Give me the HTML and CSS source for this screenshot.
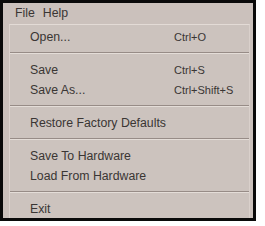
FILE: index.html
```html
<!DOCTYPE html>
<html>
<head>
<meta charset="utf-8">
<link rel="stylesheet" href="styles.css">
</head>
<body>
<div class="frame">
  <div class="menubar">
    <span class="top-item">File</span>
    <span class="top-item">Help</span>
  </div>
  <div class="dropdown">
    <div class="item"><span class="label">Open...</span><span class="key">Ctrl+O</span></div>
    <div class="sep"></div>
    <div class="item"><span class="label">Save</span><span class="key">Ctrl+S</span></div>
    <div class="item"><span class="label">Save As...</span><span class="key">Ctrl+Shift+S</span></div>
    <div class="sep"></div>
    <div class="item"><span class="label">Restore Factory Defaults</span></div>
    <div class="sep"></div>
    <div class="item"><span class="label">Save To Hardware</span></div>
    <div class="item"><span class="label">Load From Hardware</span></div>
    <div class="sep"></div>
    <div class="item"><span class="label">Exit</span></div>
  </div>
</div>
</body>
</html>
```

FILE: styles.css
```css
html, body {
  margin: 0;
  padding: 0;
  background: #ffffff;
}

.frame {
  box-sizing: border-box;
  width: 256px;
  height: 221px;
  border: 3px solid #0a0a0a;
  background: #cbc1bc;
  overflow: hidden;
  font-family: "Liberation Sans", Arial, sans-serif;
  font-size: 12.3px;
  color: #3a3634;
  display: flex;
  flex-direction: column;
}

.menubar {
  height: 21px;
  line-height: 21px;
  padding-left: 12px;
  display: flex;
  gap: 8px;
  flex: none;
}

.top-item {
  display: block;
}

.dropdown {
  flex: 1;
  margin-left: 6px;
  margin-right: 3px;
  border-top: 1px solid #e3dbd6;
  border-left: 1px solid #ddd4cf;
  border-right: 1px solid #d9d0cb;
  background: #ccc3be;
  padding-top: 2px;
}

.item {
  display: grid;
  grid-template-columns: 144px auto;
  height: 20px;
  line-height: 20px;
  padding-left: 20px;
  white-space: nowrap;
}

.key {
  font-size: 11px;
}

.sep {
  height: 1px;
  margin: 5px 0 6px;
  background: #978c87;
  border-bottom: 1px solid #e4ddd8;
}
```
